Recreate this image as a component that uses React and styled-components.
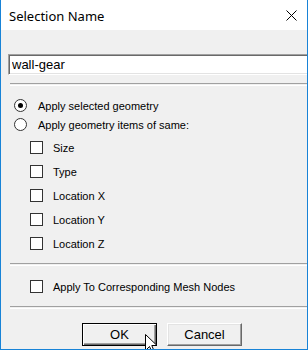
import React from "react";
import styled, { createGlobalStyle } from "styled-components";

const GlobalStyle = createGlobalStyle`
  html, body {
    margin: 0;
    padding: 0;
    background: #ffffff;
  }
`;

const Window = styled.div`
  position: relative;
  width: 308px;
  height: 350px;
  box-sizing: border-box;
  border: 1px solid #1883d7;
  border-top: none;
  background: #f0f0f0;
  overflow: hidden;
  display: flex;
  flex-direction: column;
`;

const TitleBar = styled.div`
  height: 30px;
  flex: none;
  background: #ffffff;
  display: flex;
  align-items: center;
  justify-content: space-between;
  padding: 0 9px 0 8px;
`;

const Title = styled.span`
  font-family: "Noto Sans", "Segoe UI", sans-serif;
  font-size: 13px;
  color: #000000;
  margin-top: 1px;
`;

const CloseIcon = styled.svg`
  width: 11px;
  height: 11px;
  margin-right: 1px;
  margin-top: 1px;
`;

const Client = styled.div`
  flex: 1;
  display: flex;
  flex-direction: column;
  padding-left: 7px;
  width: 340px;
  font-family: "Liberation Sans", Arial, sans-serif;
  font-size: 11px;
  color: #000000;
`;

const NameInput = styled.input`
  margin-top: 24px;
  height: 21px;
  box-sizing: border-box;
  width: 330px;
  padding: 0 0 0 3px;
  font-family: "Liberation Sans", Arial, sans-serif;
  font-size: 13px;
  color: #000000;
  background: #ffffff;
  border-top: 1px solid #a0a0a0;
  border-left: 1px solid #a0a0a0;
  border-right: 1px solid #ffffff;
  border-bottom: 1px solid #ffffff;
  box-shadow: inset 1px 1px 0 #696969, inset -1px -1px 0 #e3e3e3;
  outline: none;
`;

const Separator = styled.div`
  margin-top: ${(p) => p.$gap}px;
  margin-left: 2px;
  height: 1px;
  border-top: 1px solid #a0a0a0;
  border-bottom: 1px solid #ffffff;
`;

const Row = styled.div`
  display: flex;
  align-items: center;
  height: ${(p) => p.$h}px;
  margin-top: ${(p) => p.$gap || 0}px;
  padding-left: ${(p) => p.$indent}px;
`;

const Radio = styled.span`
  width: 13px;
  height: 13px;
  box-sizing: border-box;
  border-radius: 50%;
  border: 1px solid #333333;
  background: #ffffff;
  display: flex;
  align-items: center;
  justify-content: center;
  margin-right: 11px;

  &::after {
    content: "";
    width: 5px;
    height: 5px;
    border-radius: 50%;
    background: ${(p) => (p.$checked ? "#000000" : "transparent")};
  }
`;

const Check = styled.span`
  width: 13px;
  height: 13px;
  box-sizing: border-box;
  border: 1px solid #333333;
  background: #ffffff;
  margin-right: 10px;
`;

const Label = styled.span`
  white-space: nowrap;
  margin-top: 1px;
`;

const Buttons = styled.div`
  display: flex;
  gap: 10px;
  margin-top: 14px;
  padding-left: 74px;
`;

const Button = styled.div`
  width: 75px;
  height: 23px;
  box-sizing: border-box;
  display: flex;
  align-items: center;
  justify-content: center;
  font-family: "Liberation Sans", Arial, sans-serif;
  font-size: 13px;
  background: #f0f0f0;
  border: 1px solid ${(p) => (p.$default ? "#000000" : "#f0f0f0")};
  border-top-color: ${(p) => (p.$default ? "#000000" : "#ffffff")};
  border-left-color: ${(p) => (p.$default ? "#000000" : "#ffffff")};
  border-right-color: ${(p) => (p.$default ? "#000000" : "#696969")};
  border-bottom-color: ${(p) => (p.$default ? "#000000" : "#696969")};
  box-shadow: ${(p) =>
    p.$default
      ? "inset 1px 1px 0 #ffffff, inset -1px -1px 0 #696969, inset -2px -2px 0 #a0a0a0"
      : "inset -1px -1px 0 #a0a0a0, inset 1px 1px 0 #e3e3e3"};
`;

const Cursor = styled.svg`
  position: absolute;
  left: 144px;
  top: 334px;
  width: 13px;
  height: 20px;
`;

const options = ["Size", "Type", "Location X", "Location Y", "Location Z"];

export default function App() {
  return (
    <>
      <GlobalStyle />
      <Window>
        <TitleBar>
          <Title>Selection Name</Title>
          <CloseIcon viewBox="0 0 11 11">
            <path d="M0.5 0.5 L10.5 10.5 M10.5 0.5 L0.5 10.5" stroke="#000" strokeWidth="1" />
          </CloseIcon>
        </TitleBar>
        <Client>
          <NameInput defaultValue="wall-gear" />
          <Separator $gap={8} />
          <Row $h={19} $gap={10} $indent={6}>
            <Radio $checked />
            <Label>Apply selected geometry</Label>
          </Row>
          <Row $h={19} $indent={6}>
            <Radio />
            <Label>Apply geometry items of same:</Label>
          </Row>
          {options.map((o, i) => (
            <Row key={o} $h={24} $gap={i === 0 ? 1 : 0} $indent={22}>
              <Check />
              <Label>{o}</Label>
            </Row>
          ))}
          <Separator $gap={8} />
          <Row $h={24} $gap={8} $indent={22}>
            <Check />
            <Label>Apply To Corresponding Mesh Nodes</Label>
          </Row>
          <Separator $gap={8} />
          <Buttons>
            <Button $default>OK</Button>
            <Button>Cancel</Button>
          </Buttons>
        </Client>
        <Cursor viewBox="0 0 13 20">
          <path
            d="M0.5 0.5 L0.5 16.5 L4.5 12.5 L7.5 19 L9.5 18 L6.8 11.5 L12 11.5 Z"
            fill="#ffffff"
            stroke="#000000"
            strokeWidth="1"
          />
        </Cursor>
      </Window>
    </>
  );
}
